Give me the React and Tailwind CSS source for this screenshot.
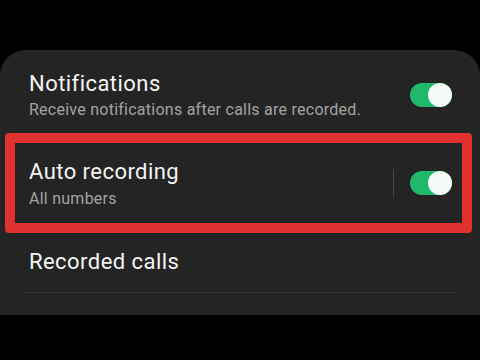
import React from "react";

// Call recording settings card (dark theme)
function Toggle() {
  return (
    <div className="relative h-[24px] w-[42px] rounded-full bg-[#1fb86c]">
      <div className="absolute right-0 top-0 h-[24px] w-[24px] rounded-full bg-[#f4fbf6]" />
    </div>
  );
}

export default function App() {
  return (
    <div
      className="h-[360px] w-[480px] overflow-hidden bg-black"
      style={{ fontFamily: "Roboto, 'Noto Sans', sans-serif" }}
    >
      <div className="mt-[50px] h-[265px] rounded-t-[26px] bg-[#242424]">
        {/* Notifications */}
        <div className="flex h-[83px] items-center justify-between pl-[29px] pr-[28px] pt-[6px]">
          <div>
            <div className="text-[22px] leading-[28px] tracking-[0.45px] text-[#f5f5f5]">Notifications</div>
            <div className="mt-[2px] text-[16px] leading-[20px] tracking-[0.25px] text-[#a3a3a3]">
              Receive notifications after calls are recorded.
            </div>
          </div>
          <Toggle />
        </div>

        {/* Auto recording, highlighted */}
        <div className="ml-[5px] flex h-[100px] w-[467px] items-center justify-between rounded-[4px] border-[10px] border-[#e03131] pl-[14px] pr-[10px]">
          <div>
            <div className="text-[22px] leading-[28px] tracking-[0.45px] text-[#f5f5f5]">Auto recording</div>
            <div className="mt-[3px] text-[16px] leading-[20px] tracking-[0.25px] text-[#a3a3a3]">All numbers</div>
          </div>
          <div className="flex items-center gap-[16px]">
            <div className="h-[28px] w-px bg-[#4a4a4a]" />
            <Toggle />
          </div>
        </div>

        {/* Recorded calls */}
        <div className="flex h-[59px] items-center pl-[29px] pb-[2px]">
          <div className="text-[22px] leading-[28px] tracking-[0.45px] text-[#f5f5f5]">Recorded calls</div>
        </div>
        <div className="mx-[24px] h-px bg-[#383838]" />
      </div>
    </div>
  );
}
